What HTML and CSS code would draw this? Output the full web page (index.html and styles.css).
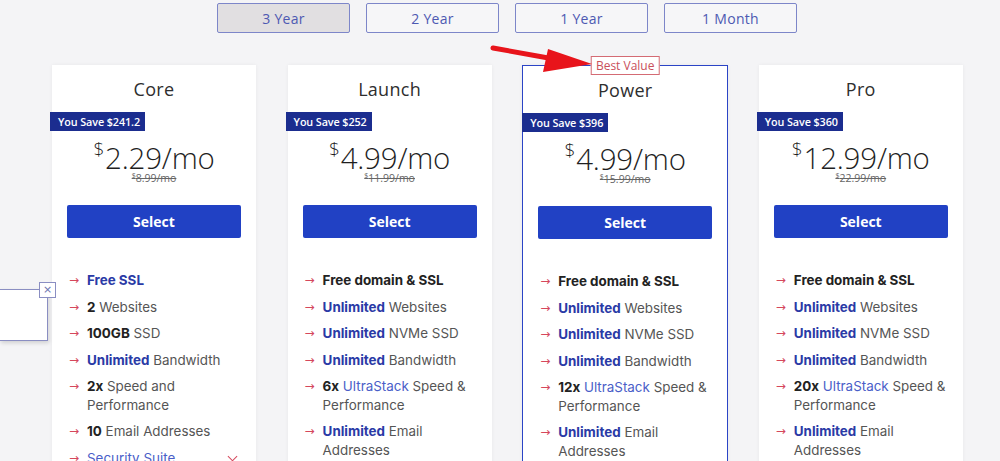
FILE: index.html
```html
<!DOCTYPE html>
<html>
<head>
    <meta charset="utf-8">
    <title>Hosting Plans</title>
    <link rel="stylesheet" href="styles.css">
</head>
<body>

<div class="page">

    <!-- TERM SWITCH -->
    <div class="terms">
        <button class="term active">3 Year</button>
        <button class="term">2 Year</button>
        <button class="term">1 Year</button>
        <button class="term">1 Month</button>
    </div>

    <!-- PLANS -->
    <div class="plans">

        <div class="plan">
            <h3>Core</h3>
            <div class="save">You Save $241.2</div>
            <div class="price"><sup>$</sup>2.29/mo</div>
            <div class="old"><sup>$</sup>8.99/mo</div>
            <button class="select">Select</button>
            <ul class="features">
                <li><span><b class="blue">Free SSL</b></span></li>
                <li><span><b>2</b> Websites</span></li>
                <li><span><b>100GB</b> SSD</span></li>
                <li><span><b class="blue">Unlimited</b> Bandwidth</span></li>
                <li><span><b>2x</b> Speed and Performance</span></li>
                <li><span><b>10</b> Email Addresses</span></li>
                <li class="drop"><span><em>Security Suite</em><i class="chev"></i></span></li>
                <li><span>Marketplace Themes</span></li>
            </ul>
        </div>

        <div class="plan">
            <h3>Launch</h3>
            <div class="save">You Save $252</div>
            <div class="price"><sup>$</sup>4.99/mo</div>
            <div class="old"><sup>$</sup>11.99/mo</div>
            <button class="select">Select</button>
            <ul class="features">
                <li><span><b>Free domain &amp; SSL</b></span></li>
                <li><span><b class="blue">Unlimited</b> Websites</span></li>
                <li><span><b class="blue">Unlimited</b> NVMe SSD</span></li>
                <li><span><b class="blue">Unlimited</b> Bandwidth</span></li>
                <li><span><b>6x</b> <em>UltraStack</em> Speed &amp; Performance</span></li>
                <li><span><b class="blue">Unlimited</b> Email Addresses</span></li>
                <li><span>Security Suite</span></li>
            </ul>
        </div>

        <div class="plan best">
            <div class="best-tag">Best Value</div>
            <h3>Power</h3>
            <div class="save">You Save $396</div>
            <div class="price"><sup>$</sup>4.99/mo</div>
            <div class="old"><sup>$</sup>15.99/mo</div>
            <button class="select">Select</button>
            <ul class="features">
                <li><span><b>Free domain &amp; SSL</b></span></li>
                <li><span><b class="blue">Unlimited</b> Websites</span></li>
                <li><span><b class="blue">Unlimited</b> NVMe SSD</span></li>
                <li><span><b class="blue">Unlimited</b> Bandwidth</span></li>
                <li><span><b>12x</b> <em>UltraStack</em> Speed &amp; Performance</span></li>
                <li><span><b class="blue">Unlimited</b> Email Addresses</span></li>
                <li><span>Security Suite</span></li>
            </ul>
        </div>

        <div class="plan">
            <h3>Pro</h3>
            <div class="save">You Save $360</div>
            <div class="price"><sup>$</sup>12.99/mo</div>
            <div class="old"><sup>$</sup>22.99/mo</div>
            <button class="select">Select</button>
            <ul class="features">
                <li><span><b>Free domain &amp; SSL</b></span></li>
                <li><span><b class="blue">Unlimited</b> Websites</span></li>
                <li><span><b class="blue">Unlimited</b> NVMe SSD</span></li>
                <li><span><b class="blue">Unlimited</b> Bandwidth</span></li>
                <li><span><b>20x</b> <em>UltraStack</em> Speed &amp; Performance</span></li>
                <li><span><b class="blue">Unlimited</b> Email Addresses</span></li>
                <li><span>Security Suite</span></li>
            </ul>
        </div>

    </div>

    <!-- annotation arrow -->
    <svg class="pointer" width="110" height="36" viewBox="0 0 110 36">
        <line x1="5" y1="8" x2="66" y2="19" stroke="#e8141b" stroke-width="5" stroke-linecap="round"/>
        <polygon points="104,24 60,9 55,32" fill="#e8141b"/>
    </svg>

    <!-- little popup on the left -->
    <div class="popup">
        <span class="popup-close">&times;</span>
    </div>

</div>

</body>
</html>
```

FILE: styles.css
```css
html, body {
    margin: 0;
    height: 461px;
    overflow: hidden;
}

body {
    background: #f4f4f6;
    font-family: "Open Sans", sans-serif;
    color: #333;
}

.page {
    position: relative;
    width: 911px;
    margin-left: 52px;
    padding-top: 3px;
}

/* term switch */
.terms {
    display: flex;
    justify-content: center;
    gap: 16px;
    padding-right: 1px;
}

.term {
    width: 133px;
    height: 30px;
    background: #f6f6f8;
    border: 1px solid #7d86c9;
    border-radius: 2px;
    color: #4d59b2;
    font-family: "Open Sans", sans-serif;
    font-size: 14px;
    letter-spacing: 0.3px;
    padding: 0;
}

.term.active {
    background: #e1dfe1;
}

/* plans */
.plans {
    display: grid;
    grid-template-columns: repeat(4, 204px);
    column-gap: 31.6px;
    margin-top: 32px;
}

.plan {
    position: relative;
    background: #fff;
    text-align: center;
    box-shadow: 0 0 4px rgba(0, 0, 0, 0.05);
    height: 470px;
}

.plan.best {
    border: 1px solid #2b44c6;
    box-sizing: border-box;
    width: 206px;
    margin-left: -1px;
}

.plan h3 {
    margin: 0;
    padding-top: 12px;
    font-size: 18px;
    line-height: 24px;
    font-weight: 400;
    color: #2e2e2e;
    letter-spacing: 0.3px;
}

.best-tag {
    position: absolute;
    top: -10px;
    left: 50%;
    transform: translateX(-50%);
    background: #fff;
    border: 1px solid #d46b74;
    color: #c9505b;
    font-size: 12px;
    line-height: 17px;
    padding: 0 4px;
    white-space: nowrap;
}

.save {
    width: fit-content;
    margin: 11px 0 0 -2px;
    background: #1b2d8f;
    color: #fff;
    font-size: 10.8px;
    font-weight: 600;
    line-height: 19px;
    letter-spacing: -0.1px;
    padding: 0 5px 0 8px;
}

.best .save {
    margin-left: -1px;
}

.price {
    margin-top: 10px;
    font-size: 29.5px;
    line-height: 34px;
    font-weight: 300;
    color: #1f1f1f;
    letter-spacing: -0.2px;
}

.price sup {
    font-size: 19px;
    vertical-align: top;
    line-height: 22px;
    position: relative;
    top: -3px;
    margin-right: 1px;
}

.old {
    margin-top: -3px;
    font-size: 10.5px;
    line-height: 12px;
    color: #666;
    text-decoration: line-through;
}

.old sup {
    font-size: 7px;
    vertical-align: top;
    line-height: 8px;
}

.select {
    display: block;
    width: 174px;
    height: 33px;
    margin: 21px auto 0;
    background: #2141c4;
    border: none;
    border-radius: 2px;
    color: #fff;
    font-family: "Open Sans", sans-serif;
    font-size: 14px;
    font-weight: 700;
}

/* features */
.features {
    list-style: none;
    margin: 33px 0 0;
    padding: 0 14px 0 17px;
    text-align: left;
    font-family: Inter, sans-serif;
    font-size: 13.4px;
    line-height: 18.5px;
    color: #555;
}

.features li {
    display: grid;
    grid-template-columns: 10px 1fr;
    column-gap: 8px;
    margin-bottom: 8px;
}

.features li::before {
    content: "→";
    font-family: "DejaVu Sans", sans-serif;
    font-size: 12px;
    color: #d5475c;
}

.features b {
    font-weight: 700;
    color: #222;
}

.features b.blue {
    color: #2a3aa6;
}

.features em {
    font-style: normal;
    color: #4a5ec8;
}

.drop span {
    display: flex;
    justify-content: space-between;
    align-items: center;
}

.chev {
    width: 6px;
    height: 6px;
    border-right: 1.5px solid #d5475c;
    border-bottom: 1.5px solid #d5475c;
    transform: rotate(45deg);
    margin-right: 6px;
    margin-top: -2px;
}

/* annotation arrow */
.pointer {
    position: absolute;
    left: 436px;
    top: 40px;
}

/* popup on the left edge */
.popup {
    position: absolute;
    left: -52px;
    top: 289px;
    width: 47px;
    height: 50px;
    background: #fff;
    border: 1px solid #8a8ec2;
    border-left: none;
    box-shadow: 1px 2px 4px rgba(0, 0, 0, 0.15);
}

.popup-close {
    position: absolute;
    right: -9px;
    top: -8px;
    width: 15px;
    height: 14px;
    background: #fff;
    border: 1px solid #8a8ec2;
    color: #6c72b0;
    font-family: "DejaVu Sans", sans-serif;
    font-size: 11px;
    line-height: 14px;
    text-align: center;
}
```
